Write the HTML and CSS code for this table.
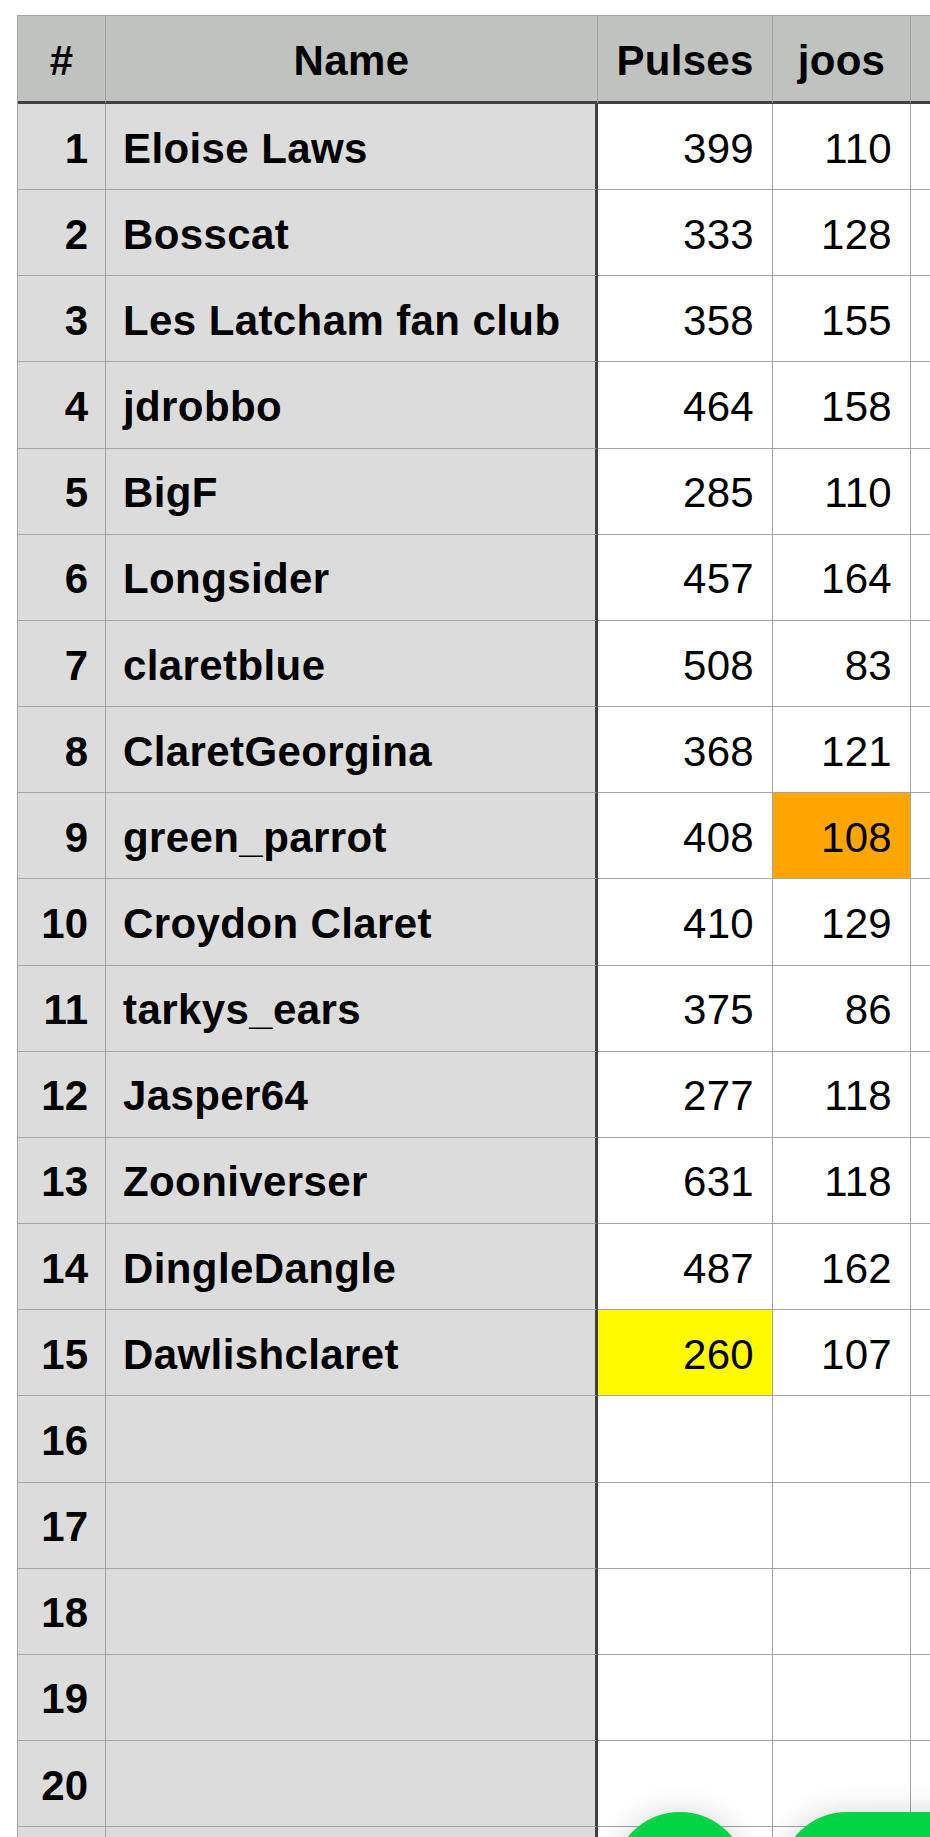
FILE: index.html
```html
<!DOCTYPE html>
<html lang="en">
<head>
<meta charset="utf-8">
<title>Sheet</title>
<link rel="stylesheet" href="styles.css">
</head>
<body>
<div class="screen">
  <div class="sheet">
    <div class="row head">
      <div class="cell rank">#</div>
      <div class="cell name">Name</div>
      <div class="cell num">Pulses</div>
      <div class="cell num">joos</div>
      <div class="cell extra"></div>
    </div>
    <div class="row"><div class="cell rank">1</div><div class="cell name">Eloise Laws</div><div class="cell num">399</div><div class="cell num">110</div><div class="cell extra"></div></div>
    <div class="row"><div class="cell rank">2</div><div class="cell name">Bosscat</div><div class="cell num">333</div><div class="cell num">128</div><div class="cell extra"></div></div>
    <div class="row"><div class="cell rank">3</div><div class="cell name">Les Latcham fan club</div><div class="cell num">358</div><div class="cell num">155</div><div class="cell extra"></div></div>
    <div class="row"><div class="cell rank">4</div><div class="cell name">jdrobbo</div><div class="cell num">464</div><div class="cell num">158</div><div class="cell extra"></div></div>
    <div class="row"><div class="cell rank">5</div><div class="cell name">BigF</div><div class="cell num">285</div><div class="cell num">110</div><div class="cell extra"></div></div>
    <div class="row"><div class="cell rank">6</div><div class="cell name">Longsider</div><div class="cell num">457</div><div class="cell num">164</div><div class="cell extra"></div></div>
    <div class="row"><div class="cell rank">7</div><div class="cell name">claretblue</div><div class="cell num">508</div><div class="cell num">83</div><div class="cell extra"></div></div>
    <div class="row"><div class="cell rank">8</div><div class="cell name">ClaretGeorgina</div><div class="cell num">368</div><div class="cell num">121</div><div class="cell extra"></div></div>
    <div class="row"><div class="cell rank">9</div><div class="cell name">green_parrot</div><div class="cell num">408</div><div class="cell num orange">108</div><div class="cell extra"></div></div>
    <div class="row"><div class="cell rank">10</div><div class="cell name">Croydon Claret</div><div class="cell num">410</div><div class="cell num">129</div><div class="cell extra"></div></div>
    <div class="row"><div class="cell rank">11</div><div class="cell name">tarkys_ears</div><div class="cell num">375</div><div class="cell num">86</div><div class="cell extra"></div></div>
    <div class="row"><div class="cell rank">12</div><div class="cell name">Jasper64</div><div class="cell num">277</div><div class="cell num">118</div><div class="cell extra"></div></div>
    <div class="row"><div class="cell rank">13</div><div class="cell name">Zooniverser</div><div class="cell num">631</div><div class="cell num">118</div><div class="cell extra"></div></div>
    <div class="row"><div class="cell rank">14</div><div class="cell name">DingleDangle</div><div class="cell num">487</div><div class="cell num">162</div><div class="cell extra"></div></div>
    <div class="row"><div class="cell rank">15</div><div class="cell name">Dawlishclaret</div><div class="cell num yellow">260</div><div class="cell num">107</div><div class="cell extra"></div></div>
    <div class="row"><div class="cell rank">16</div><div class="cell name"></div><div class="cell num"></div><div class="cell num"></div><div class="cell extra"></div></div>
    <div class="row"><div class="cell rank">17</div><div class="cell name"></div><div class="cell num"></div><div class="cell num"></div><div class="cell extra"></div></div>
    <div class="row"><div class="cell rank">18</div><div class="cell name"></div><div class="cell num"></div><div class="cell num"></div><div class="cell extra"></div></div>
    <div class="row"><div class="cell rank">19</div><div class="cell name"></div><div class="cell num"></div><div class="cell num"></div><div class="cell extra"></div></div>
    <div class="row"><div class="cell rank">20</div><div class="cell name"></div><div class="cell num"></div><div class="cell num"></div><div class="cell extra"></div></div>
    <div class="row"><div class="cell rank"></div><div class="cell name"></div><div class="cell num"></div><div class="cell num"></div><div class="cell extra"></div></div>
  </div>
  <div class="fab fab-round"></div>
  <div class="fab fab-pill"></div>
</div>
</body>
</html>
```

FILE: styles.css
```css
html, body {
  margin: 0;
  padding: 0;
  background: #ffffff;
}

.screen {
  position: relative;
  width: 930px;
  height: 1837px;
  overflow: hidden;
  background: #ffffff;
  font-family: "Liberation Sans", Arial, sans-serif;
  font-size: 42px;
  color: #000000;
}

.sheet {
  display: grid;
  grid-template-columns: 88px 492px 175px 138px 100px;
  grid-auto-rows: 86.16px;
  grid-template-rows: 88px;
  width: max-content;
  margin: 15px 0 0 17px;
  border-top: 1px solid #a4a4a4;
  border-left: 1px solid #a4a4a4;
}

.row {
  display: contents;
}

.cell {
  box-sizing: border-box;
  display: flex;
  align-items: center;
  padding-top: 4px;
  border-right: 1px solid #a4a4a4;
  border-bottom: 1px solid #a4a4a4;
  background: #ffffff;
  white-space: nowrap;
  overflow: hidden;
}

.rank {
  justify-content: flex-end;
  padding-right: 17px;
  font-weight: bold;
  background: #dcdcdc;
}

.name {
  justify-content: flex-start;
  padding-left: 17px;
  font-weight: bold;
  letter-spacing: 0.4px;
  background: #dcdcdc;
  border-right: 3px solid #404040;
}

.num {
  justify-content: flex-end;
  padding-right: 18px;
  letter-spacing: 0.3px;
}

.orange {
  background: #ffa500;
}

.yellow {
  background: #fffa00;
}

.head .cell {
  background: #c0c2c0;
  font-weight: bold;
  justify-content: center;
  padding: 4px 0 0 0;
  border-bottom: 3px solid #404040;
}

.head .name {
  border-right: 1px solid #a4a4a4;
}

.fab {
  position: absolute;
  top: 1812px;
  height: 134px;
  background: #02d445;
  box-shadow: 0 0 30px rgba(0, 0, 0, 0.16);
}

.fab-round {
  left: 613px;
  width: 134px;
  border-radius: 50%;
}

.fab-pill {
  left: 780px;
  width: 300px;
  border-radius: 67px;
}
```
